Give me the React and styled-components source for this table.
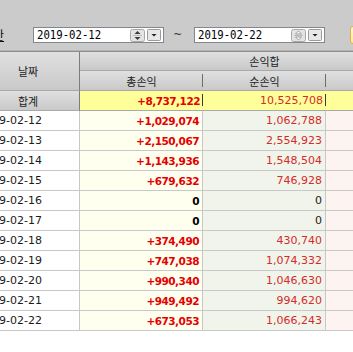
import styled, { createGlobalStyle } from "styled-components";

const GlobalStyle = createGlobalStyle`
    html, body {
        margin: 0;
        padding: 0;
        background: #ffffff;
        overflow: hidden;
    }
`;

const Page = styled.div`
    width: 353px;
    height: 352px;
    overflow: hidden;
    background: #ffffff;
    font-family: "DejaVu Sans", "Noto Sans CJK KR", sans-serif;
`;

const Toolbar = styled.div`
    height: 51px;
    box-sizing: border-box;
    background: #cbcbcb;
    display: flex;
    align-items: flex-start;
    padding-top: 27px;
    margin-left: -18px;
    width: calc(100% + 18px);
    border-bottom: 1px solid #b4b4b4;
`;

const Label = styled.span`
    width: 24px;
    flex: none;
    font-family: "Noto Sans CJK KR", sans-serif;
    font-size: 12px;
    line-height: 16px;
    color: #111;
    text-decoration: underline;
    white-space: nowrap;
`;

const DateBox = styled.div`
    width: 131px;
    height: 16px;
    box-sizing: border-box;
    margin-left: ${(p) => p.$gap}px;
    flex: none;
    display: flex;
    align-items: center;
    background: #ffffff;
    border: 1px solid #828790;
    padding: 0 2px 0 3px;
`;

const DateText = styled.span`
    flex: 1;
    font-family: "DejaVu Sans Mono", monospace;
    font-size: 13px;
    line-height: 14px;
    color: #000;
    transform: scaleX(0.82);
    transform-origin: left center;
    white-space: nowrap;
`;

const Spin = styled.svg`
    flex: none;
    display: block;
`;

const Tilde = styled.span`
    margin-left: 9px;
    width: 10px;
    flex: none;
    font-size: 11px;
    line-height: 16px;
    color: #333;
`;

const YellowButton = styled.div`
    margin-left: 25px;
    margin-top: -1px;
    width: 30px;
    height: 18px;
    flex: none;
    box-sizing: border-box;
    background: linear-gradient(#fff6d0, #ffe9a0);
    border: 1px solid #e3b04b;
    border-radius: 3px;
`;

const Grid = styled.div`
    display: grid;
    grid-template-columns: 103px 123px 123px 123px;
    grid-template-rows: 19px 20px repeat(12, 20px);
    margin-left: -23px;
    border-top: 1px solid #8e8e8e;
`;

const HeadCell = styled.div`
    position: relative;
    box-sizing: border-box;
    grid-column: ${(p) => p.$col || "auto"};
    grid-row: ${(p) => p.$row || "auto"};
    background: linear-gradient(#e0e0e0, #c9c9c9);
    border-bottom: 1px solid #a9a9a9;
    border-right: ${(p) => (p.$edge ? "1px solid #7c7c7c" : "none")};
    display: flex;
    align-items: center;
    justify-content: center;
    font-family: "Noto Sans CJK KR", sans-serif;
    font-size: 11px;
    color: #222;
    white-space: nowrap;
    overflow: hidden;
    &::after {
        content: "";
        display: ${(p) => (p.$sep ? "block" : "none")};
        position: absolute;
        right: 0;
        top: 3px;
        bottom: 3px;
        width: 1px;
        background: #6e6e6e;
    }
`;

const SumCell = styled.div`
    position: relative;
    box-sizing: border-box;
    background: #ffff99;
    border-bottom: 1px solid #a9a9a9;
    display: flex;
    align-items: center;
    justify-content: flex-end;
    padding-right: 3px;
    font-size: ${(p) => (p.$bold ? "10.5px" : "11px")};
    color: ${(p) => (p.$bold ? "#e50000" : "#d42b2b")};
    font-weight: ${(p) => (p.$bold ? "bold" : "normal")};
    letter-spacing: ${(p) => (p.$bold ? "-0.5px" : "0")};
    white-space: nowrap;
    &::after {
        content: "";
        position: absolute;
        right: 0;
        top: 3px;
        bottom: 4px;
        width: 1px;
        background: #3a3a3a;
    }
`;

const tints = ["#ffffff", "#fffff0", "#f1f4ea", "#fdf4f1"];

const Cell = styled.div`
    box-sizing: border-box;
    background: ${(p) => tints[p.$col]};
    border-bottom: 1px solid #c8c8c8;
    border-right: 1px solid #c8c8c8;
    display: flex;
    align-items: center;
    justify-content: ${(p) => (p.$col === 0 ? "flex-start" : "flex-end")};
    padding: ${(p) => (p.$col === 0 ? "0 0 0 1px" : "0 3px 0 0")};
    font-size: ${(p) => (p.$bold ? "10.5px" : "11px")};
    color: ${(p) => p.$color};
    font-weight: ${(p) => (p.$bold ? "bold" : "normal")};
    letter-spacing: ${(p) => (p.$bold ? "-0.5px" : "0")};
    white-space: nowrap;
    overflow: hidden;
`;

const rows = [
    ["2019-02-12", "+1,029,074", "1,062,788"],
    ["2019-02-13", "+2,150,067", "2,554,923"],
    ["2019-02-14", "+1,143,936", "1,548,504"],
    ["2019-02-15", "+679,632", "746,928"],
    ["2019-02-16", "0", "0"],
    ["2019-02-17", "0", "0"],
    ["2019-02-18", "+374,490", "430,740"],
    ["2019-02-19", "+747,038", "1,074,332"],
    ["2019-02-20", "+990,340", "1,046,630"],
    ["2019-02-21", "+949,492", "994,620"],
    ["2019-02-22", "+673,053", "1,066,243"],
];

const SpinIcon = ({ faded }) => (
    <Spin width="15" height="13" viewBox="0 0 15 13">
        <rect x="0.5" y="0.5" width="14" height="12" rx="2" fill="#e4e4e4" stroke="#a8a8a8" />
        <line x1="3" y1="6.5" x2="12" y2="6.5" stroke="#bdbdbd" />
        <path d="M4.5 5 L7.5 2 L10.5 5 Z" fill={faded ? "#ffffff" : "#3c3c3c"} stroke={faded ? "#8a8a8a" : "none"} strokeWidth="0.8" />
        <path d="M4.5 8 L7.5 11 L10.5 8 Z" fill={faded ? "#ffffff" : "#3c3c3c"} stroke={faded ? "#8a8a8a" : "none"} strokeWidth="0.8" />
    </Spin>
);

const DropIcon = () => (
    <Spin width="14" height="12" viewBox="0 0 14 12" style={{ marginLeft: 2 }}>
        <rect x="0.5" y="0.5" width="13" height="11" rx="1" fill="#e8e8e8" stroke="#9a9a9a" />
        <path d="M4.5 5 L9.5 5 L7 7.5 Z" fill="#222" />
    </Spin>
);

const App = () => {
    return (
        <Page>
            <GlobalStyle />
            <Toolbar>
                <Label>기간</Label>
                <DateBox $gap={27}>
                    <DateText>2019-02-12</DateText>
                    <SpinIcon />
                    <DropIcon />
                </DateBox>
                <Tilde>~</Tilde>
                <DateBox $gap={11}>
                    <DateText>2019-02-22</DateText>
                    <SpinIcon faded />
                    <DropIcon />
                </DateBox>
                <YellowButton />
            </Toolbar>
            <Grid>
                <HeadCell $row="1 / span 2" $edge>날짜</HeadCell>
                <HeadCell $col="2 / span 3">손익합</HeadCell>
                <HeadCell $sep>총손익</HeadCell>
                <HeadCell $sep>순손익</HeadCell>
                <HeadCell $sep>실현손익</HeadCell>

                <HeadCell $edge>합계</HeadCell>
                <SumCell $bold>+8,737,122</SumCell>
                <SumCell>10,525,708</SumCell>
                <SumCell />

                {rows.map(([date, total, net]) => {
                    const zero = total === "0";
                    return [
                        <Cell key={date + "d"} $col={0} $color="#1a1a1a">{date}</Cell>,
                        <Cell key={date + "t"} $col={1} $bold $color={zero ? "#000" : "#e50000"}>{total}</Cell>,
                        <Cell key={date + "n"} $col={2} $color={zero ? "#222" : "#d42b2b"}>{net}</Cell>,
                        <Cell key={date + "x"} $col={3} $color="#d42b2b"></Cell>,
                    ];
                })}
            </Grid>
        </Page>
    );
};

export default App;
